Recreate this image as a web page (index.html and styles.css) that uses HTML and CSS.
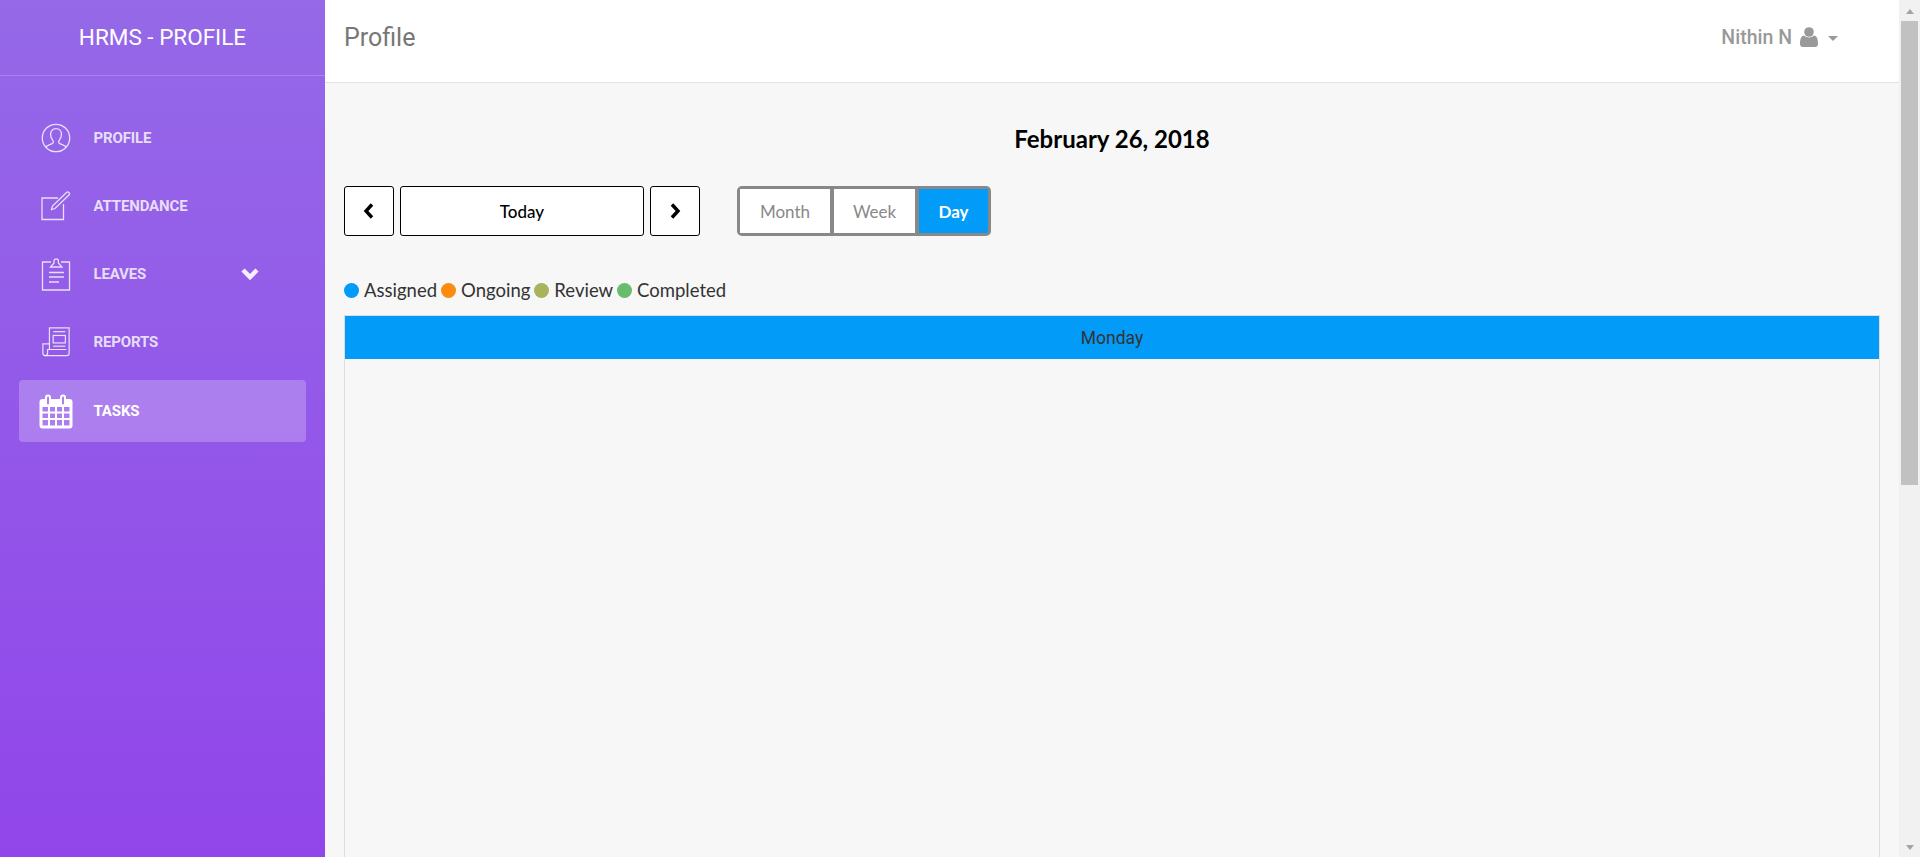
FILE: index.html
```html
<!DOCTYPE html>
<html lang="en">
<head>
<meta charset="utf-8">
<title>HRMS - Profile</title>
<link rel="stylesheet" href="styles.css">
</head>
<body>
<div class="app">
  <aside class="sidebar">
    <div class="brand">HRMS - PROFILE</div>
    <nav class="nav">
      <a class="nav-item">
        <svg class="nav-icon" viewBox="0 0 30 30"><circle cx="15" cy="15" r="13.7"/><path d="M4.8 24.2c1.5-2.4 4.600-2.600 6.800-3.800 1-.6.900-2 .2-3-1.500-1.800-2.200-3.800-2.200-6 0-3.300 2.200-5.700 5.400-5.700s5.400 2.400 5.400 5.700c0 2.200-.7 4.200-2.200 6-.7 1-.8 2.400.2 3 2.200 1.200 5.300 1.400 6.800 3.800"/></svg>
        <span class="nav-label">Profile</span>
      </a>
      <a class="nav-item">
        <svg class="nav-icon" viewBox="0 0 30 30"><path d="M22.500 13v15.500H1V7h16"/><path d="M10.500 18.500l1-3.500L25.500 1.500c.8-.7 1.800-.7 2.500 0s.7 1.800 0 2.500L14 17.500z"/></svg>
        <span class="nav-label">Attendance</span>
      </a>
      <a class="nav-item">
        <svg class="nav-icon" viewBox="0 0 30 34"><path d="M10 5H1.500v28h27V5H20"/><path d="M9.500 10l3.500-4V4a2.200 2.200 0 0 1 4.400 0v2l3.500 4z"/><path d="M8 15.500h15M8 20h15M8 25h10" class="thick"/></svg>
        <span class="nav-label">Leaves</span>
        <svg class="nav-chevron" viewBox="0 0 20 14"><path d="M3 3l7 7 7-7"/></svg>
      </a>
      <a class="nav-item">
        <svg class="nav-icon" viewBox="0 0 32 32"><path d="M9 24V1h21v27c0 1.500-1 2.500-2.500 2.500H4"/><path d="M9 18H2v10c0 1.500 1 2.500 2.500 2.500S7 29.500 7 28v-4h20"/><path d="M13 5h13"/><rect x="13" y="9" width="13" height="8"/><path d="M13 20.500h13"/></svg>
        <span class="nav-label">Reports</span>
      </a>
      <a class="nav-item nav-item-active">
        <svg class="nav-icon nav-icon-solid" viewBox="0 0 34 36"><path fill-rule="evenodd" d="M9 1.500a3 3 0 0 1 3 3V6h9V4.500a3 3 0 0 1 6 0V6h3.500A3 3 0 0 1 33.500 9v23.500a3 3 0 0 1-3 3h-27a3 3 0 0 1-3-3V9a3 3 0 0 1 3-3H6V4.500a3 3 0 0 1 3-3zM8 6v4.500a1 1 0 0 0 2 0V4.500a1 1 0 0 0-2 0zM23 4.500v6a1 1 0 0 0 2 0v-6a1 1 0 0 0-2 0zM3.500 14v4.500h5.500V14zm7.500 0v4.500h5V14zm7 0v4.500h5V14zm7 0v4.500h5.500V14zM3.500 20.500v4.500h5.500v-4.500zm7.500 0v4.500h5v-4.500zm7 0v4.500h5v-4.500zm7 0v4.500h5.500v-4.500zM3.500 27v5.500h5.500V27zm7.500 0v5.500h5V27zm7 0v5.500h5V27zm7 0v5.500h5.500V27z"/></svg>
        <span class="nav-label">Tasks</span>
      </a>
    </nav>
  </aside>

  <div class="main">
    <header class="topbar">
      <h1 class="page-title">Profile</h1>
      <div class="user">
        <span class="user-name">Nithin N</span>
        <svg class="user-icon" viewBox="0 0 18 20"><circle cx="9" cy="5" r="4.800"/><path d="M0 17c0-5 1.200-8 4-8.500C5 9.500 6.800 10.400 9 10.400s4-.9 5-1.900c2.800.5 4 3.500 4 8.500 0 2-1.300 3-3 3H3c-1.700 0-3-1-3-3z"/></svg>
        <span class="caret"></span>
      </div>
    </header>

    <section class="content">
      <h2 class="cal-title">February 26, 2018</h2>
      <div class="toolbar">
        <div class="pager">
          <button class="pager-btn pager-arrow"><svg viewBox="0 0 12 18"><path d="M9 2.500L3 9l6 6.500"/></svg></button>
          <button class="pager-btn pager-today">Today</button>
          <button class="pager-btn pager-arrow"><svg viewBox="0 0 12 18"><path d="M3 2.500L9 9l-6 6.500"/></svg></button>
        </div>
        <div class="views">
          <button class="view view-month">Month</button>
          <button class="view view-week">Week</button>
          <button class="view view-day">Day</button>
        </div>
      </div>
      <ul class="legend">
        <li class="legend-item"><span class="dot dot-assigned"></span>Assigned</li>
        <li class="legend-item"><span class="dot dot-ongoing"></span>Ongoing</li>
        <li class="legend-item"><span class="dot dot-review"></span>Review</li>
        <li class="legend-item"><span class="dot dot-completed"></span>Completed</li>
      </ul>
      <div class="calendar">
        <div class="cal-head">Monday</div>
        <div class="cal-body"></div>
      </div>
    </section>
  </div>

  <div class="scrollbar">
    <span class="sb-arrow sb-up"></span>
    <span class="sb-thumb"></span>
    <span class="sb-arrow sb-down"></span>
  </div>
</div>
</body>
</html>
```

FILE: styles.css
```css
* { box-sizing: border-box; }
html, body { margin: 0; height: 100%; overflow: hidden; }
body { font-family: Roboto, "Liberation Sans", sans-serif; background: #f7f7f7; }

.app { display: flex; height: 857px; overflow: hidden; }

/* Sidebar */
.sidebar {
  width: 325px;
  flex: none;
  background: linear-gradient(180deg, #9569e8 0%, #9146ea 100%);
  color: #fff;
}
.brand {
  height: 76px;
  border-bottom: 1px solid rgba(255, 255, 255, .2);
  font-size: 22.500px;
  line-height: 75px;
  text-align: center;
}
.nav { display: flex; flex-direction: column; gap: 6px; padding: 31px 19px 0; }
.nav-item {
  display: flex;
  align-items: center;
  height: 62px;
  padding-left: 22px;
  border-radius: 4px;
  color: rgba(255, 255, 255, .8);
}
.nav-item-active { margin-top: 1px; background: rgba(255, 255, 255, .23); color: #fff; }
.nav-icon {
  width: 30px;
  height: 34px;
  flex: none;
  margin-right: 22.500px;
  fill: none;
  stroke: currentColor;
  stroke-width: 1.300;
}
.nav-icon .thick { stroke-width: 1.600; }
.nav-icon-solid { width: 34px; height: 36px; margin-left: -2px; margin-right: 20.500px; fill: currentColor; stroke: none; }
.nav-label { font-size: 15px; font-weight: 700; text-transform: uppercase; letter-spacing: -.15px; }
.nav-chevron {
  width: 20px;
  height: 14px;
  margin-left: 93.500px;
  fill: none;
  stroke: rgba(255, 255, 255, .9);
  stroke-width: 4.500;
}

/* Main */
.main { flex: 1; min-width: 0; display: flex; flex-direction: column; }
.topbar {
  height: 83px;
  flex: none;
  display: flex;
  align-items: center;
  justify-content: space-between;
  padding: 0 61px 8px 19px;
  background: #fff;
  border-bottom: 1px solid #e3e3e3;
}
.page-title { margin: 0; font-size: 25px; font-weight: 400; color: #777; }
.user { display: flex; align-items: center; color: #999; }
.user-name { font-size: 19.500px; font-weight: 500; }
.user-icon { width: 18px; height: 20px; margin-left: 8px; fill: #999; }
.caret {
  width: 0;
  height: 0;
  margin: 3px 0 0 10px;
  border-left: 5px solid transparent;
  border-right: 5px solid transparent;
  border-top: 5px solid #999;
}

.content { flex: 1; min-height: 0; display: flex; flex-direction: column; padding: 0 19px; }
.cal-title {
  margin: 41px 0 0;
  font-family: Lato, "Liberation Sans", sans-serif;
  font-size: 24px;
  line-height: 30px;
  font-weight: 700;
  color: #000;
  text-align: center;
}
.toolbar { display: flex; gap: 37px; margin-top: 32px; }
.pager { display: flex; gap: 6px; }
.pager-btn {
  height: 50px;
  padding: 0;
  background: #fff;
  border: 1px solid #000;
  border-radius: 3px;
  color: #000;
  font-family: Lato, "Liberation Sans", sans-serif;
  font-size: 17px;
  font-weight: 500;
}
.pager-arrow { width: 50px; display: flex; align-items: center; justify-content: center; }
.pager-arrow svg { width: 12px; height: 18px; fill: none; stroke: #000; stroke-width: 3.400; }
.pager-today { width: 244px; }
.views {
  display: flex;
  gap: 4px;
  height: 50px;
  background: #888;
  border: 3px solid #888;
  border-radius: 5px;
}
.view {
  padding: 0;
  border: 0;
  background: #fff;
  color: #888;
  font-family: Lato, "Liberation Sans", sans-serif;
  font-size: 17px;
}
.view-month { width: 90px; }
.view-week { width: 81px; }
.view-day { width: 69px; background: #039bf8; color: #fff; font-weight: 700; }

.legend { display: flex; gap: 4px; margin: 41px 0 0; padding: 0; list-style: none; }
.legend-item {
  display: flex;
  align-items: center;
  gap: 5px;
  font-family: Lato, "Liberation Sans", sans-serif;
  font-size: 18.500px;
  line-height: 26px;
  color: #333;
}
.dot { width: 15px; height: 15px; border-radius: 50%; }
.dot-assigned { background: #039bf8; }
.dot-ongoing { background: #fb8c0f; }
.dot-review { background: #a9b35c; }
.dot-completed { background: #69bb6d; }

.calendar { flex: 1; display: flex; flex-direction: column; margin-top: 12px; border: 1px solid #ddd; border-bottom: 0; }
.cal-head {
  height: 43px;
  flex: none;
  background: #039bf8;
  color: #333;
  font-size: 17.500px;
  line-height: 45px;
  text-align: center;
}
.cal-body { flex: 1; }

/* Scrollbar */
.scrollbar {
  width: 21px;
  flex: none;
  display: flex;
  flex-direction: column;
  align-items: center;
  background: #f1f1f1;
  padding: 0 2px 0 2px;
}
.sb-arrow { width: 0; height: 0; border-left: 4.500px solid transparent; border-right: 4.500px solid transparent; }
.sb-up { margin-top: 9px; border-bottom: 5px solid #a3a3a3; }
.sb-thumb { width: 17px; height: 464px; margin-top: 7px; background: #c1c1c1; }
.sb-down { margin-top: auto; margin-bottom: 7px; border-top: 5px solid #a3a3a3; }
```
